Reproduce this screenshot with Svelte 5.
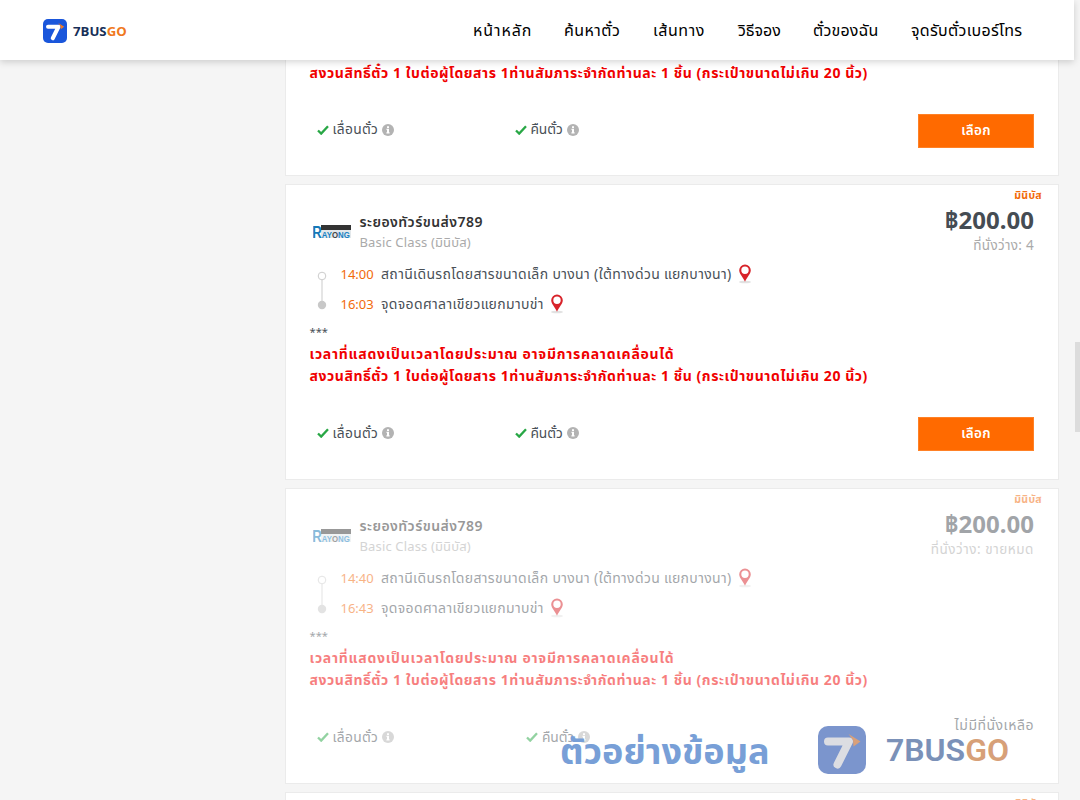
<script>
  const nav = [
    { label: 'หน้าหลัก', w: 58, ls: 0.9 },
    { label: 'ค้นหาตั๋ว', w: 56, ls: 0.45 },
    { label: 'เส้นทาง', w: 52, ls: 0.6 },
    { label: 'วิธีจอง', w: 42, ls: 0 },
    { label: 'ตั๋วของฉัน', w: 65, ls: 0.2 },
    { label: 'จุดรับตั๋วเบอร์โทร', w: 112, ls: 0.3 }
  ];
  const trips = [
    { depart: '14:00', arrive: '16:03', seats: '4', soldOut: false },
    { depart: '14:40', arrive: '16:43', seats: 'ขายหมด', soldOut: true }
  ];
</script>

{#snippet mark(bg, fg, accent)}
  <svg class="mark" viewBox="0 0 48 48">
    <rect width="48" height="48" rx="10" fill={bg} />
    <path d="M10 15.500H31L19.500 38.500" fill="none" stroke={fg} stroke-width="8" stroke-linecap="round" stroke-linejoin="round" />
    <path d="M30.500 8L42.500 15.500L35.500 20.500L35 14z" fill={accent} />
  </svg>
{/snippet}

{#snippet pin()}
  <svg class="pin" viewBox="0 0 14 20">
    <ellipse cx="7" cy="18" rx="6" ry="1.300" fill="#e2e2e2" />
    <path fill-rule="evenodd" d="M7 .5A5.800 5.800 0 0 0 1.200 6.300C1.200 10 5 13 7 17.800C9 13 12.800 10 12.800 6.300A5.800 5.800 0 0 0 7 .5zM7 2.500a3.700 3.700 0 1 1 0 7.400a3.700 3.700 0 0 1 0-7.400z" fill="#d8232a" />
  </svg>
{/snippet}

{#snippet feature(label, ls)}
  <div class="feature">
    <svg class="tick" viewBox="0 0 12 10"><path d="M1 5.500L4.200 8.600L11 1.200" fill="none" stroke="#28a745" stroke-width="2.300" /></svg>
    <span style="letter-spacing:{ls}px">{label}</span>
    <svg class="info" viewBox="0 0 12 12"><circle cx="6" cy="6" r="6" fill="#b3b3b3" /><path d="M5 2.200h2v1.700H5zM4.500 4.800H7v3.500h.6v1.200H4.400V8.300H5V6H4.500z" fill="#fff" /></svg>
  </div>
{/snippet}

{#snippet luggage()}
  <div class="note n2">สงวนสิทธิ์ตั๋ว 1 ใบต่อผู้โดยสาร 1ท่านสัมภาระจำกัดท่านละ 1 ชิ้น (กระเป๋าขนาดไม่เกิน 20 นิ้ว)</div>
{/snippet}

{#snippet foot(soldOut)}
  <div class="foot">
    {@render feature('เลื่อนตั๋ว', 0.3)}
    {@render feature('คืนตั๋ว', -0.1)}
    {#if soldOut}<div class="none">ไม่มีที่นั่งเหลือ</div>{:else}<button>เลือก</button>{/if}
  </div>
{/snippet}

<div class="page">
  <header>
    <div class="brand">{@render mark('#1a56db', '#fff', '#f47920')}<span>7BUS<b>GO</b></span></div>
    <nav>
      {#each nav as n}<a href="#top" style="width:{n.w}px;letter-spacing:{n.ls}px">{n.label}</a>{/each}
    </nav>
  </header>

  <main>
    <article class="first">
      {@render luggage()}
      {@render foot(false)}
    </article>
    {#each trips as t}
      <article class:sold={t.soldOut}>
        <div class="fade">
          <div class="badge">มินิบัส</div>
          <div class="head">
            <svg class="logo" viewBox="0 0 38 16">
              <rect x="8" y="1" width="30" height="5" fill="#333" />
              <rect x="8" y="6" width="30" height="8" fill="#e3e8eb" />
              <g transform="scale(.8 1)">
                <text x="-1" y="13.700" font-size="16.500" fill="#1479b8">R</text>
                <text x="11" y="13.700" font-size="9.800" fill="#1681c4">AY<tspan fill="#444">O</tspan>NG</text>
              </g>
            </svg>
            <div class="names">
              <div class="name">ระยองทัวร์ขนส่ง789</div>
              <div class="cls">Basic Class (มินิบัส)</div>
            </div>
            <div class="cost">
              <div class="price">฿200.00</div>
              <div class="seats">ที่นั่งว่าง: {t.seats}</div>
            </div>
          </div>
          <div class="route">
            <svg class="line" viewBox="0 0 10 40"><path d="M5 9V32" stroke="#ddd" stroke-width="1.500" /><circle cx="5" cy="5" r="3.800" fill="#fff" stroke="#ccc" /><circle cx="5" cy="34" r="4.200" fill="#c8c8c8" /></svg>
            <div class="stops">
              <div class="stop"><time>{t.depart}</time><span>สถานีเดินรถโดยสารขนาดเล็ก บางนา (ใต้ทางด่วน แยกบางนา)</span>{@render pin()}</div>
              <div class="stop"><time>{t.arrive}</time><span>จุดจอดศาลาเขียวแยกมาบข่า</span>{@render pin()}</div>
            </div>
          </div>
          <div class="stars">***</div>
          <div class="note n1">เวลาที่แสดงเป็นเวลาโดยประมาณ อาจมีการคลาดเคลื่อนได้</div>
          {@render luggage()}
          {@render foot(t.soldOut)}
        </div>
      </article>
    {/each}
    <article class="sold">
      <div class="fade"><div class="badge">มินิบัส</div></div>
    </article>
  </main>

  <div class="watermark">
    <span class="sample">ตัวอย่างข้อมูล</span>
    {@render mark('#7b95cd', '#dcdde2', '#d9a079')}
    <span class="wbrand">7BUS<b>GO</b></span>
  </div>
  <div class="scroll"></div>
</div>

<style>
  :global(body) { margin: 0; }
  .page { position: relative; width: 1080px; height: 800px; overflow: hidden; background: #f5f5f5; font-family: "Noto Sans", "Noto Sans Thai", sans-serif; color: #495057; font-size: 13px; }
  header { position: relative; z-index: 2; box-sizing: border-box; width: 1074px; height: 60px; padding: 1px 51px 0 43px; display: flex; align-items: center; justify-content: space-between; background: #fff; box-shadow: 0 2px 7px rgba(0,0,0,.17); }
  .brand { display: flex; align-items: center; gap: 6px; font: 700 13.200px "Open Sans", sans-serif; color: #172f57; }
  .brand .mark { width: 24px; height: 24px; }
  .brand b { color: #f07820; font-weight: 700; }
  nav { display: flex; gap: 33px; font-size: 16px; }
  nav a { color: #000; text-decoration: none; white-space: nowrap; }
  main { width: 774px; margin-left: 285px; }
  article { box-sizing: border-box; height: 295.900px; margin-bottom: 8px; padding: 0 24px 0 23.500px; background: #fff; border: 1px solid #ebebeb; white-space: nowrap; }
  article.first { height: 115.900px; padding-top: 2.400px; border-top: 0; }
  .sold .fade { opacity: .5; }
  .badge { height: 21px; line-height: 21px; margin-right: -8px; text-align: right; font-size: 10.500px; letter-spacing: .3px; font-weight: 700; color: #f26a0a; }
  .head { display: flex; height: 48px; }
  .logo { width: 38px; height: 16px; margin: 18px 8.500px 0 3.500px; font-family: "Liberation Sans", sans-serif; font-weight: 700; }
  .names { padding-top: 6px; line-height: 20px; }
  .name { font-size: 14px; font-weight: 600; letter-spacing: .45px; color: #333; }
  .cls { color: #aaa; letter-spacing: .15px; }
  .cost { margin-left: auto; text-align: right; }
  .price { height: 29px; line-height: 27px; font-size: 24px; font-weight: 700; color: #454c53; }
  .seats { line-height: 20px; font-size: 13.500px; letter-spacing: .3px; color: #aaa; }
  .sold .seats { letter-spacing: .55px; }
  .route { display: flex; margin-top: 5px; height: 60px; }
  .line { width: 10px; height: 40px; margin: 12px 14px 0 7px; }
  .stop { display: flex; align-items: center; height: 30px; }
  .stop time { width: 40.500px; color: #f26a0a; }
  .stop span { padding-top: 1px; font-size: 14px; letter-spacing: .35px; }
  .pin { width: 14px; height: 20px; margin-left: 6px; }
  .stars { margin-top: 3px; height: 21.500px; line-height: 20px; font-size: 11.200px; }
  .note { height: 21.500px; line-height: 21.500px; color: #f00000; font-weight: 700; font-size: 14px; }
  .n1 { letter-spacing: .73px; }
  .n2 { letter-spacing: .56px; }
  .foot { display: flex; height: 34px; margin-top: 30.800px; padding-left: 7px; }
  .first .foot { margin-top: 30px; }
  .feature { width: 198px; display: flex; align-items: center; gap: 4px; height: 32px; font-size: 13.800px; }
  .sold .feature { width: 209.500px; }
  .tick { width: 12px; height: 10px; }
  .info { width: 12px; height: 12px; }
  button { margin-left: auto; width: 116px; height: 34px; padding: 0; border: 1px solid #ff8126; background: #ff6a00; color: #fff; font: 600 13.500px "Noto Sans", "Noto Sans Thai", sans-serif; letter-spacing: .3px; }
  .none { margin: -6px 0 0 auto; line-height: 20px; font-size: 14px; letter-spacing: .5px; }
  .watermark { position: absolute; z-index: 1; left: 560px; top: 724px; height: 52px; display: flex; align-items: center; white-space: nowrap; }
  .watermark .mark { width: 48px; height: 48px; }
  .sample { width: 258px; padding-top: 5px; font-size: 36px; font-weight: 700; color: #789fd7; }
  .wbrand { margin-left: 20px; font: 600 32px Roboto, sans-serif; color: #7b91b8; }
  .wbrand b { font-weight: 600; color: #d7a078; }
  .scroll { position: absolute; left: 1075px; top: 342px; width: 5px; height: 90px; background: #dcdcdc; }
</style>
